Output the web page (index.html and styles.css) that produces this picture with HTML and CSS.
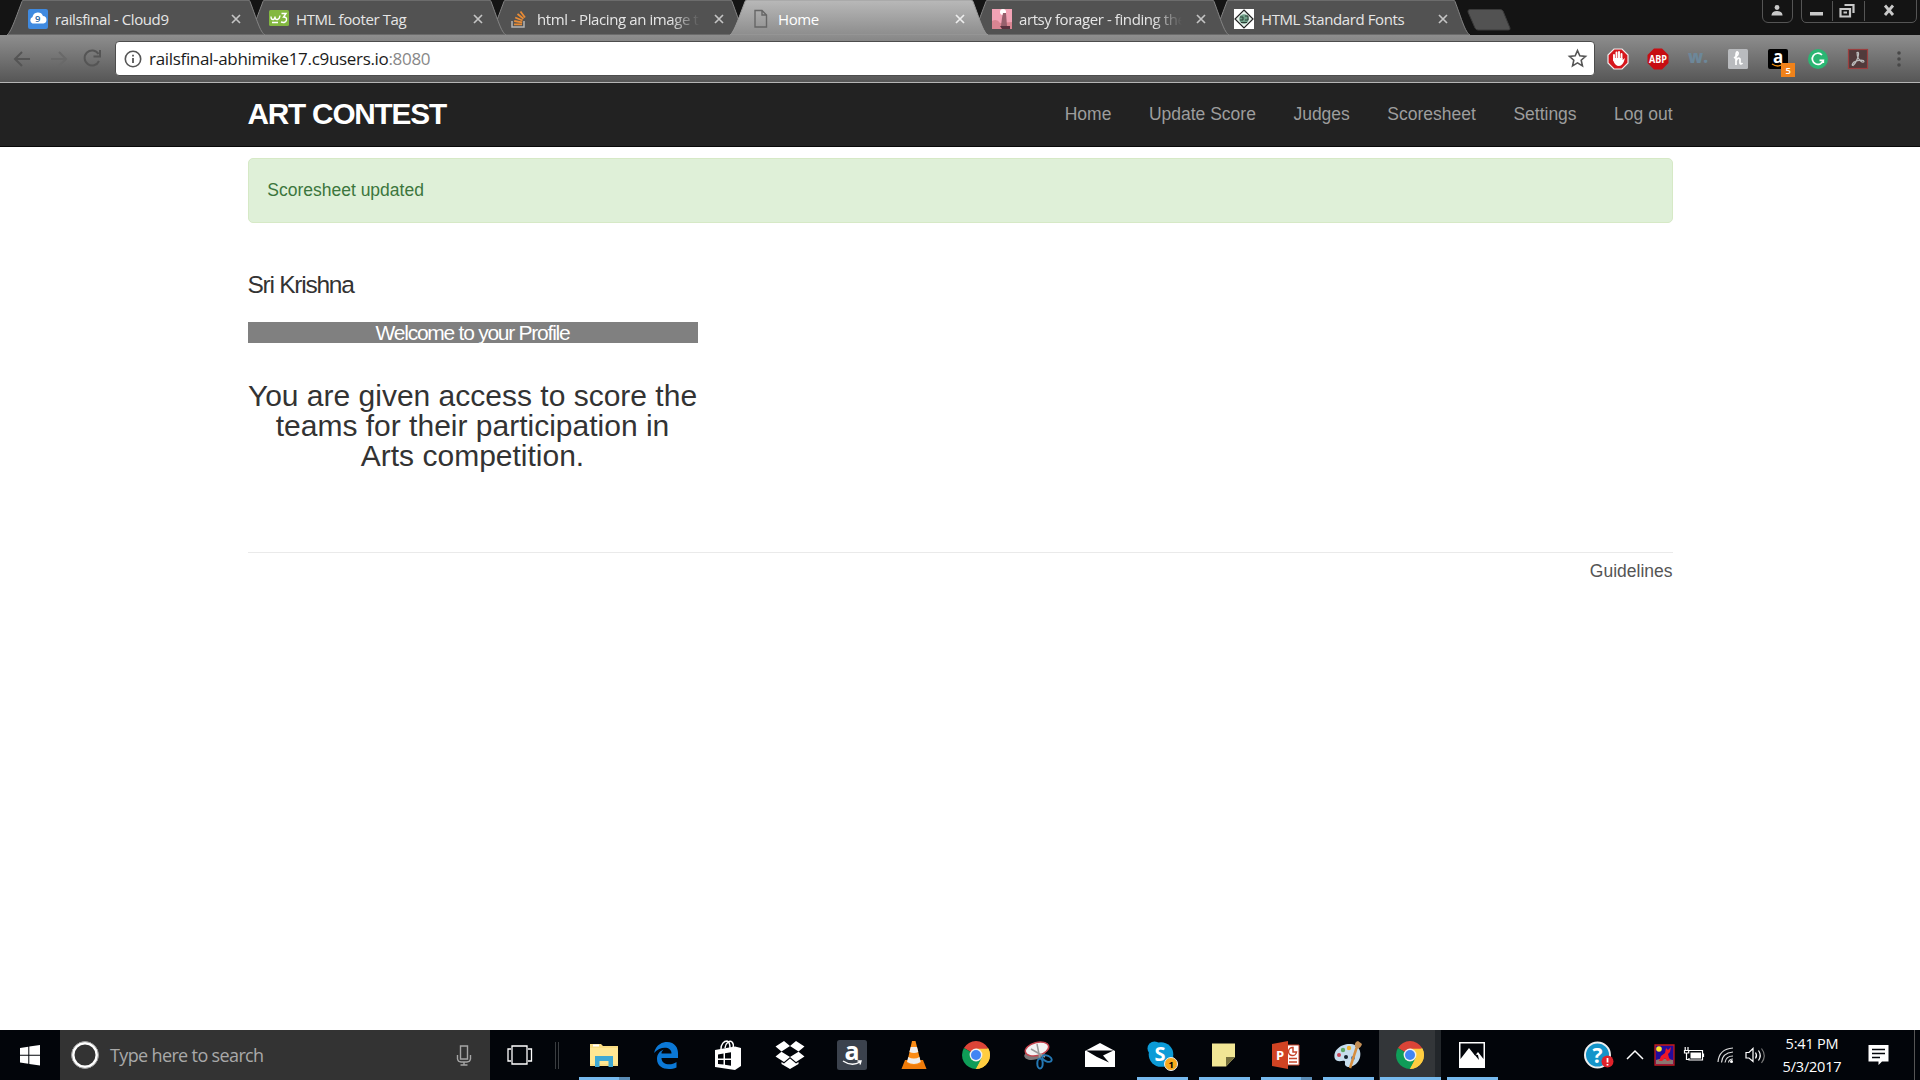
FILE: index.html
```html
<!DOCTYPE html>
<html lang="en">
<head>
<meta charset="utf-8">
<title>Home</title>
<link rel="stylesheet" href="styles.css">
</head>
<body>
<svg width="0" height="0" class="defs" aria-hidden="true">
  <defs>
    <linearGradient id="tab-active" x1="0" y1="0" x2="0" y2="1"><stop offset="0" stop-color="#b9b9b9"/><stop offset="1" stop-color="#8d8d8d"/></linearGradient>
    <symbol id="tab-shape" viewBox="0 0 258 35"><path d="M0 35C4 32 8 20 15 1.500Q15.500 0 17 0H241Q242.500 0 243 1.500C250 20 253 32 258 35Z"/></symbol>
    <symbol id="close" viewBox="0 0 10 10"><path d="M1 1L9 9M9 1L1 9" stroke="#c4c4c4" stroke-width="1.700"/></symbol>
    <symbol id="close-light" viewBox="0 0 10 10"><path d="M1 1L9 9M9 1L1 9" stroke="#eee" stroke-width="1.700"/></symbol>
    <symbol id="chrome" viewBox="0 0 28 28">
      <path d="M14 14L1.900 7A14 14 0 0 1 26.100 7Z" fill="#db4437"/>
      <path d="M14 14L26.100 7A14 14 0 0 1 14 28L13 27Z" fill="#ffcd40"/>
      <path d="M14 14L1.900 7A14 14 0 0 0 14 28L20 17.500Z" fill="#0f9d58"/>
      <path d="M14 7.700H26.500A14 14 0 0 1 14 28L19.500 17.200Z" fill="#ffcd40"/>
      <circle cx="14" cy="14" r="6.400" fill="#f1f1f1"/><circle cx="14" cy="14" r="5" fill="#4285f4"/>
    </symbol>
  </defs>
</svg>

<header class="browser">
  <div class="tab-row">
    <div class="tabs">
      <div class="tab">
        <svg class="shape" viewBox="0 0 258 35"><use href="#tab-shape"/></svg>
        <div class="tab-body">
          <svg class="favicon" viewBox="0 0 20 20"><rect width="20" height="20" rx="2" fill="#3f8ae0"/><path d="M4.500 14.500a3.500 3.500 0 0 1 0-6.500 5.500 5.500 0 0 1 10.500-1 3.800 3.800 0 0 1 .5 7.500Z" fill="#fff"/><text x="7" y="12.500" font-size="9.500" class="fav-text" fill="#28639f">9</text></svg>
          <span class="title">railsfinal - Cloud9</span>
          <svg class="close"><use href="#close"/></svg>
        </div>
      </div>
      <div class="tab">
        <svg class="shape" viewBox="0 0 258 35"><use href="#tab-shape"/></svg>
        <div class="tab-body">
          <svg class="favicon" viewBox="0 0 20 20"><rect y="1" width="20" height="16" rx="1.500" fill="#83b840"/><path d="M2 7.500Q2 11 4.500 10.500 6 10 6 7.500 6 11 8.500 10.500 10.500 10 11 6.500M12.500 4.500H17L14.500 8Q18 8 17.500 11 16.500 14.500 12 13M3 13.500H9" fill="none" stroke="#fff" stroke-width="1.400"/></svg>
          <span class="title">HTML footer Tag</span>
          <svg class="close"><use href="#close"/></svg>
        </div>
      </div>
      <div class="tab">
        <svg class="shape" viewBox="0 0 258 35"><use href="#tab-shape"/></svg>
        <div class="tab-body">
          <svg class="favicon" viewBox="0 0 20 20"><path d="M2 12V18H14V12" fill="none" stroke="#b5b5b5" stroke-width="1.500"/><path d="M4 15.300H12M4.200 12L12.200 13.300M5.200 8.500L12.500 11.500M7.500 5L13.500 9.800M10.500 2.500L15 8.500" stroke="#e88b35" stroke-width="1.800"/></svg>
          <span class="title fade">html - Placing an image t</span>
          <svg class="close"><use href="#close"/></svg>
        </div>
      </div>
      <div class="tab active">
        <svg class="shape" viewBox="0 0 258 35"><use href="#tab-shape"/></svg>
        <div class="tab-body">
          <svg class="favicon" viewBox="0 0 20 20"><path d="M1 1.500H8L12.500 6V18H1ZM8 1.500V6H12.500" fill="none" stroke="#666" stroke-width="1.400"/></svg>
          <span class="title">Home</span>
          <svg class="close"><use href="#close-light"/></svg>
        </div>
      </div>
      <div class="tab">
        <svg class="shape" viewBox="0 0 258 35"><use href="#tab-shape"/></svg>
        <div class="tab-body">
          <svg class="favicon" viewBox="0 0 20 20"><rect width="20" height="20" fill="#f2a3b6"/><path d="M0 12Q5 9 8 14L20 13V20H0Z" fill="#d98592"/><circle cx="11" cy="3" r="3" fill="#fff"/><path d="M11 4H14L15 17H9L10 9Z" fill="#96606d"/><path d="M8 17H18V20H10Z" fill="#5a3340"/></svg>
          <span class="title fade">artsy forager - finding the</span>
          <svg class="close"><use href="#close"/></svg>
        </div>
      </div>
      <div class="tab">
        <svg class="shape" viewBox="0 0 258 35"><use href="#tab-shape"/></svg>
        <div class="tab-body">
          <svg class="favicon" viewBox="0 0 20 20"><rect width="20" height="20" fill="#fff"/><path d="M10 1L19 10 10 19 1 10Z" fill="#e4efe9" stroke="#222" stroke-width="1.200"/><circle cx="10" cy="10" r="4.800" fill="#6fa088"/><path d="M6 8H9V11H6M11 7H14V11H11M7 13.500H13" fill="none" stroke="#2c3e36"/></svg>
          <span class="title">HTML Standard Fonts</span>
          <svg class="close"><use href="#close"/></svg>
        </div>
      </div>
    </div>
    <svg class="new-tab" viewBox="0 0 44 22"><path d="M3 .5H33Q35 .5 36 2L43 19Q43.500 21 41.500 21H11Q9 21 8 19L1 3Q.5 .5 3 .5Z" fill="#525252" stroke="#3a3a3a"/></svg>
    <svg class="window-controls" viewBox="0 0 156 24" fill="none" stroke="#555">
      <path d="M.5 0V17Q1 22 6 22.500H25Q30 22 30.500 17V0M39.500 0V17Q40 22.500 44 22.500H150Q154.500 22 154.500 17V0M70.500 1V21M102.500 1V21"/>
      <g fill="#c9c9c9" stroke="none"><circle cx="15" cy="7.500" r="2.400"/><path d="M9.500 15Q10 11 15 11T20.500 15V15.500H9.500ZM48 12H61V15.500H48Z"/></g>
      <path d="M78.500 9H88V16.500H78.500ZM82.500 5H91.500V13M81.500 12.500H85" stroke="#c9c9c9" stroke-width="2.200"/>
      <path d="M123 5.500L131 15M131 5.500L123 15" stroke="#c9c9c9" stroke-width="2.800"/>
    </svg>
  </div>
  <div class="toolbar">
    <svg class="nav-icons" viewBox="0 0 96 30" fill="none" stroke="#555" stroke-width="2">
      <path d="M23 15H8M15 8L8 15 15 22"/>
      <path d="M44 15H59M52 8L59 15 52 22" stroke="#696969"/>
      <path d="M91.500 10A7.500 7.500 0 1 0 92 17M93 6V12.500H86.500"/>
    </svg>
    <div class="address">
      <svg class="info" viewBox="0 0 18 18"><circle cx="9" cy="9" r="7.700" fill="none" stroke="#555" stroke-width="1.600"/><path d="M8.100 8H9.900V13H8.100ZM8.100 4.700H9.900V6.500H8.100Z" fill="#555"/></svg>
      <span class="url">railsfinal-abhimike17.c9users.io<i>:8080</i></span>
      <svg class="star" viewBox="0 0 18 18"><path d="M9 1.500L11.200 6.500 16.600 7 12.500 10.600 13.700 16 9 13.200 4.300 16 5.500 10.600 1.400 7 6.800 6.500Z" fill="none" stroke="#555" stroke-width="1.500"/></svg>
    </div>
    <div class="extensions">
      <svg viewBox="0 0 24 24"><path d="M8 2H16L22 8V16L16 22H8L2 16V8Z" fill="#d6161c" stroke="#eee" stroke-width="1.200"/><path d="M8 13V8M10.500 12V5.500M13 12V5M15.500 12V7" stroke="#fff" stroke-width="1.900" stroke-linecap="round"/><path d="M7 11H16.500V13L19 11Q17 19 13 19 9 19 7 13Z" fill="#fff"/></svg>
      <svg viewBox="0 0 24 24"><path d="M8 1.500H16L22.500 8V16L16 22.500H8L1.500 16V8Z" fill="#c70d12"/><text x="3" y="15.700" font-size="10" textLength="18" lengthAdjust="spacingAndGlyphs" class="ext-text" fill="#fff">ABP</text></svg>
      <svg viewBox="0 0 24 24"><text x="2" y="16" font-size="17" textLength="20" lengthAdjust="spacingAndGlyphs" class="ext-text heavy" fill="#6d8799">w.</text></svg>
      <svg viewBox="0 0 24 24"><rect x="2" y="2" width="20" height="20" rx="1.500" fill="#b9bbbe"/><path d="M8 11Q13 8 12 5.500 10 3.500 10 9V18M10 14Q12 9.500 14 12V16Q14.500 18 16.500 16" fill="none" stroke="#fff" stroke-width="1.700"/></svg>
      <svg class="wide" viewBox="0 0 30 30"><rect x="2" y="2" width="20" height="20" rx="2" fill="#000"/><text x="7" y="15.500" font-size="17" class="ext-text" fill="#fff">a</text><path d="M6 17Q12 21 17 17" fill="none" stroke="#f29111" stroke-width="1.300"/><rect x="15" y="16" width="14" height="14" fill="#f0821a"/><text x="19.500" y="26.500" font-size="9.500" class="badge-text" fill="#fff">5</text></svg>
      <svg viewBox="0 0 24 24"><circle cx="12" cy="12" r="10" fill="#2bb673"/><path d="M16 8A5.600 5.600 0 1 0 17.300 13.300H13.500M17.300 13V16" fill="none" stroke="#fff" stroke-width="1.700"/></svg>
      <svg viewBox="0 0 24 24"><rect x="2.500" y="2.500" width="19" height="19" fill="#513a3b" stroke="#9a3e3e" stroke-width="1.200"/><path d="M11 5.500Q13.500 4.500 12 10 10 16 7 18.500 5 18 8 15 13 12.500 17.500 13.500 19 15.500 16 15 11 12 11 5.500Z" fill="none" stroke="#bbb" stroke-width="1.200"/></svg>
      <svg viewBox="0 0 24 24" fill="#484848"><circle cx="13" cy="6" r="1.800"/><circle cx="13" cy="12" r="1.800"/><circle cx="13" cy="18" r="1.800"/></svg>
    </div>
  </div>
</header>

<main class="page">
  <nav class="navbar">
    <div class="container">
      <a class="brand">ART CONTEST</a>
      <ul class="links"><li>Home</li><li>Update Score</li><li>Judges</li><li>Scoresheet</li><li>Settings</li><li>Log out</li></ul>
    </div>
  </nav>
  <div class="content">
    <div class="alert">Scoresheet updated</div>
    <aside class="profile">
      <h1>Sri Krishna</h1>
      <h2>Welcome to your Profile</h2>
      <p>You are given access to score the<br>teams for their participation in<br>Arts competition.</p>
    </aside>
    <footer class="footer">Guidelines</footer>
  </div>
</main>

<div class="taskbar">
  <div class="start"><svg width="20" height="21" viewBox="0 0 20 21" fill="#fff"><path d="M0 3L8.300 1.800V9.700H0ZM9.300 1.600L20 0V9.700H9.300ZM0 10.700H8.300V18.700L0 17.500ZM9.300 10.700H20V20.500L9.300 18.900Z"/></svg></div>
  <div class="search">
    <svg width="28" height="28" viewBox="0 0 28 28"><circle cx="14" cy="14" r="12" fill="none" stroke="#fff" stroke-width="3"/><circle cx="14" cy="14" r="13.400" fill="none" stroke="#999"/></svg>
    <span class="search-label">Type here to search</span>
    <svg class="mic" width="16" height="21" viewBox="0 0 16 21" fill="none" stroke="#a5a5a5" stroke-width="1.400"><path d="M4.500 1H11.500V14H4.500ZM1.500 10V14Q2 17 5 17H11Q14 17 14.500 14V10M8 17V20M4.500 20H11.500"/></svg>
  </div>
  <svg class="task-view" width="26" height="20" viewBox="0 0 26 20" fill="none" stroke="#fff" stroke-width="1.300"><path d="M5 1H20V19H5ZM4 4H1V16H4M21 4H24.500V16H21"/></svg>
  <div class="divider"></div>
  <div class="apps">
    <div class="app open split"><svg viewBox="0 0 30 30"><path d="M1 4H12L14 6H29V26H1Z" fill="#f9dc82"/><path d="M1 8H29V24H1Z" fill="#ffe793"/><path d="M4 4.500H10V6.500H4Z" fill="#fff"/><path d="M6 27V16H24V27H19.500V21H10.500V27Z" fill="#3fa9d4"/></svg></div>
    <div class="app"><svg viewBox="0 0 30 30"><path d="M3 13C5 4 12 2 16 2 24 2 27 8 27 13V18H10.500C10.500 25 20 26 25.500 22V27.500C17 31 6 28.500 6 19 6 14 9 11 12.500 9.500Q10.500 11.500 10.500 13.500H20.500C20.500 6 9 6 3 13Z" fill="#0b78d6"/></svg></div>
    <div class="app"><svg viewBox="0 0 30 30"><path d="M8 9C8 4 11 1 14 1Q17 2 17 8M12 8C13 2 17 0 19 2Q21 4 20 8" fill="none" stroke="#fff" stroke-width="1.500"/><path d="M2 10L22 6.500 28 8V26L22 30 2 27Z" fill="#fff"/><path d="M5 14.500L10.500 13.500V18.500H5ZM12 13.300L18 12.300V18.500H12ZM5 20H10.500V24.500L5 24ZM12 20H18V25.700L12 24.800Z" fill="#02050a"/></svg></div>
    <div class="app"><svg viewBox="0 0 30 30" fill="#fff"><path d="M9 1L15 6 6.500 11.500.500 6.500ZM21 1L29.500 6.500 23.500 11.500 15 6ZM.5 16.500L6.500 11.800 15 17 9 22ZM23.500 11.800L29.500 16.500 21 22 15 17ZM15 18.500L21 23.500 23.500 22V24L15 29 6.500 24V22L9 23.500Z"/></svg></div>
    <div class="app"><svg viewBox="0 0 30 30"><rect width="30" height="30" rx="2.500" fill="#3b424d"/><text x="7.500" y="20" font-size="25" class="ext-text" fill="#fff">a</text><path d="M6 21Q15 27 23 22M20.500 21L24 21 23 24.500" fill="none" stroke="#fff" stroke-width="1.400"/></svg></div>
    <div class="app"><svg viewBox="0 0 30 30"><path d="M6 20H24L27.500 29H2.500Z" fill="#f07c0a"/><path d="M13 1H16.500L22 23Q15 27 8 23Z" fill="#fa8c16"/><path d="M11.700 7H18L19.300 12Q15 14 10.400 12ZM9.200 17Q15 20 20.500 17L21.700 22Q15 26 8 22Z" fill="#eee"/></svg></div>
    <div class="app"><svg viewBox="-1 -1 30 30"><use href="#chrome" width="28" height="28"/></svg></div>
    <div class="app"><svg viewBox="0 0 30 30"><ellipse cx="12" cy="14" rx="11" ry="5.500" fill="#7b7778" transform="rotate(-15 12 14)"/><ellipse cx="14" cy="9" rx="12" ry="6.500" fill="#f2f2f2" stroke="#c5434d" stroke-width="1.500" transform="rotate(-15 14 9)"/><path d="M14 4L17 19M8 9L22 17" stroke="#999" stroke-width="1.500"/><g fill="none" stroke="#2478b4" stroke-width="2"><ellipse cx="17" cy="23.500" rx="2.700" ry="5"/><ellipse cx="24" cy="18.500" rx="5" ry="2.800" transform="rotate(25 24 18.500)"/></g></svg></div>
    <div class="app"><svg viewBox="0 0 30 30"><path d="M0 11L15 3 30 11V27H0Z" fill="#fff"/><path d="M1 10.500H28.500L18 15.500 24 22.500 12 17Z" fill="#02050a"/></svg></div>
    <div class="app open"><svg viewBox="0 0 30 30"><circle cx="7.500" cy="8.500" r="7" fill="#0c9bd7"/><circle cx="20" cy="20" r="7" fill="#0c9bd7"/><circle cx="14" cy="14.500" r="12.300" fill="#0c9bd7"/><text x="7.500" y="21" font-size="20" class="ext-text" fill="#fff">S</text><circle cx="24" cy="24" r="6.500" fill="#f7a91c" stroke="#eee"/><text x="21.500" y="27.500" font-size="9.500" class="ext-text" fill="#000">1</text></svg></div>
    <div class="app open"><svg viewBox="0 0 30 30"><path d="M3 3.500H26V17L17 26.500H3Z" fill="#f1e695"/><path d="M17 26.500V17H26Z" fill="#756f3d"/></svg></div>
    <div class="app open split"><svg viewBox="0 0 30 30"><path d="M13 5H28V25H13Z" fill="#fff" stroke="#c8452b"/><path d="M1 4L17 1V29L1 26Z" fill="#d04323"/><path d="M22 7.500A4 4 0 1 0 25.500 12H22ZM18 18.500H26M18 22H26" fill="none" stroke="#c8452b" stroke-width="1.500"/><text x="5" y="19.500" font-size="13" class="ext-text" fill="#fff">P</text></svg></div>
    <div class="app open"><svg viewBox="0 0 30 30"><path d="M2 19C-1 10 9 3 18 4 29 5 30 18 23 24 17 29 11 27 12 23 13 18 5 24 2 19Z" fill="#c6dded"/><circle cx="6" cy="15" r="2" fill="#ca4455"/><circle cx="10" cy="10" r="2.200" fill="#60a864"/><circle cx="16" cy="8" r="2.200" fill="#efb12f"/><circle cx="13" cy="17" r="2" fill="#15232f"/><circle cx="20" cy="18" r="2" fill="#4477b4"/><path d="M17 28L23.500 8" stroke="#d78e3e" stroke-width="2.500"/><path d="M22 7Q21 2 25 1L29 4Q28 8 24 9Z" fill="#c49057"/></svg></div>
    <div class="app open current"><svg viewBox="-1 -1 30 30"><use href="#chrome" width="28" height="28"/></svg></div>
    <div class="app open"><svg viewBox="0 0 30 30"><path d="M2 2H28V28H2Z" fill="#fff"/><path d="M3.500 3.500H26.500V19L21 12 18 15.500 12 8 3.500 19Z" fill="#02050a"/><path d="M17 14L22 20 21 15Z" fill="#02050a"/></svg></div>
  </div>
  <div class="tray">
    <svg class="help" width="30" height="28" viewBox="0 0 30 28"><circle cx="13.500" cy="14" r="12.500" fill="#1494c9" stroke="#eee" stroke-width="2"/><text x="8.500" y="21.500" font-size="21" class="ext-text" fill="#fff">?</text><circle cx="23.500" cy="20.500" r="6" fill="#e0222a"/><path d="M23.500 17V21.500M23.500 23V24.500" stroke="#fff" stroke-width="1.800"/></svg>
    <svg class="chevron" width="18" height="12" viewBox="0 0 18 12" fill="none" stroke="#fff" stroke-width="1.500"><path d="M1 10L9 2 17 10"/></svg>
    <svg class="game" width="21" height="22" viewBox="0 0 21 22"><path d="M1 1H20V21H1Z" fill="#220c9c" stroke="#c51b1b" stroke-width="1.300"/><circle cx="5" cy="5" r="2.800" fill="#ffe52b"/><path d="M2 16Q8 13 19 16V20H2Z" fill="#8c7770"/><path d="M5 17L7 12 11 9 12 4 14 6 17 3 16 8 14 10 15 14 17 16 13 17 11 14 8 17Z" fill="#ee1826"/></svg>
    <svg class="battery" width="21" height="16" viewBox="0 0 21 16" fill="none" stroke="#fff" stroke-width="1.200"><path d="M5 3.500H18.500V13H5V11M19.500 6.500V10"/><path d="M6.500 5.500H17V11.500H6.500Z" fill="#fff" stroke="none"/><path d="M1.200 0V3M4 0V3M.5 3.500H4.700V6H.5ZM2.500 6V12.500H5"/></svg>
    <svg class="wifi" width="18" height="17" viewBox="0 0 18 17" fill="none" stroke="#ddd" stroke-width="1.200"><path d="M1 15Q2 2 16 1M4.500 15.500Q5 6 16 5M8 15.500Q9 9 16 9"/><path d="M11.500 15.500Q12 12 16 12" /><circle cx="14.500" cy="14.500" r="1.500" fill="#fff" stroke="none"/></svg>
    <svg class="speaker" width="21" height="19" viewBox="0 0 21 19" fill="none" stroke="#fff" stroke-width="1.200"><path d="M1 6.500H4L8 2.500V15.500L4 12H1ZM10.500 6.500Q12.500 9.500 10.500 12.500M13.500 4.500Q17 9.500 13.500 14.500"/><path d="M16.500 2.500Q22 9.500 16.500 17" stroke="#777"/></svg>
    <div class="clock"><span>5:41 PM</span><span>5/3/2017</span></div>
    <svg class="notice" width="21" height="20" viewBox="0 0 21 20"><path d="M.5 0H20.500V16.500H14L10.500 20V16.500H.5Z" fill="#fff"/><path d="M4 4.500H17M4 8.500H17M4 12.500H12" stroke="#02050a" stroke-width="1.300"/></svg>
    <div class="peek"></div>
  </div>
</div>
</body>
</html>
```
FILE: styles.css
```css
* { box-sizing: border-box; }
body { margin: 0; width: 1920px; height: 1080px; overflow: hidden; display: flex; flex-direction: column; background: #fff; font-family: "Liberation Sans", Arial, sans-serif; }
svg { display: block; flex: none; overflow: visible; }
.defs { position: absolute; }
.browser { height: 83px; flex: none; font-family: "Open Sans", "Noto Sans", sans-serif; }
.ext-text { font-family: "Open Sans", sans-serif; font-weight: 700; }
.heavy { font-weight: 800; }
.fav-text, .badge-text { font-family: "Open Sans", sans-serif; font-weight: 600; }

.tab-row { height: 35px; background: #141414; display: flex; padding-left: 7px; }
.tabs { display: flex; }
.tab { width: 258px; height: 35px; margin-right: -17px; display: grid; position: relative; }
.tab:nth-child(1) { z-index: 6; }
.tab:nth-child(2) { z-index: 5; }
.tab:nth-child(3) { z-index: 4; }
.tab:nth-child(5) { z-index: 3; }
.tab:nth-child(6) { z-index: 2; }
.tab.active { z-index: 10; }
.shape { grid-area: 1 / 1; width: 258px; height: 35px; fill: #525252; stroke: #858585; stroke-width: 1; }
.active .shape { fill: url(#tab-active); stroke: #9c9c9c; }
.tab-body { grid-area: 1 / 1; min-width: 0; display: flex; align-items: center; padding: 3px 23px 0 21px; color: #e6e6e6; }
.tab:first-child .tab-body { padding-right: 24px; }
.tab:last-child .tab-body { padding: 3px 22px 0 22px; }
.active .tab-body { padding-left: 24px; color: #fff; }
.favicon { width: 20px; height: 20px; margin-right: 7px; }
.active .favicon { margin-right: 4px; }
.title { flex: 1; min-width: 0; margin-right: 10px; font-size: 15px; line-height: 20px; white-space: nowrap; overflow: hidden; letter-spacing: -0.4px; }
.fade { margin-right: 14px; -webkit-mask-image: linear-gradient(90deg, #000 82%, transparent 100%); mask-image: linear-gradient(90deg, #000 82%, transparent 100%); }
.close { width: 10px; height: 10px; }
.new-tab { width: 44px; height: 22px; margin: 9px 0 0 14px; }
.window-controls { width: 156px; height: 24px; margin-left: auto; margin-right: 2px; }

.toolbar { height: 48px; border-bottom: 1px solid #b5b5b5; background: linear-gradient(#8e8e8e, #565656); display: flex; align-items: center; padding-left: 7px; }
.nav-icons { width: 96px; height: 30px; }
.address { width: 1480px; height: 35px; margin-left: 12px; padding: 0 9px 0 8px; border: 1px solid #4d4d4d; border-radius: 4px; background: #fff; display: flex; align-items: center; }
.info { width: 18px; height: 18px; }
.url { flex: 1; margin-left: 7px; font-size: 17px; letter-spacing: -0.32px; line-height: 24px; color: #1b1b1b; }
.url i { font-style: normal; color: #888; }
.star { width: 19px; height: 19px; margin-right: -2px; }
.extensions { height: 24px; display: flex; gap: 16px; margin-left: 11px; }
.extensions svg { width: 24px; height: 24px; }
.extensions .wide { width: 30px; height: 30px; margin-right: -6px; }

.page { flex: 1; min-height: 0; color: #333; font-size: 17.5px; }
.navbar { height: 64px; background: #222; border-bottom: 1px solid #080808; }
.container, .content { width: 1425px; margin-left: 247.5px; }
.container { display: flex; justify-content: space-between; align-items: center; height: 62px; }
.brand { font-size: 29.75px; font-weight: 700; letter-spacing: -1.2px; color: #fff; line-height: 62px; }
.links { display: flex; gap: 37.5px; list-style: none; margin: 0; padding: 0; color: #9d9d9d; }
.alert { height: 65px; margin-top: 11px; padding: 18.75px; border: 1px solid #d6e9c6; border-radius: 5px; background: #dff0d8; color: #3c763d; line-height: 25px; }
.profile { width: 450px; margin-top: 50px; text-align: center; }
.profile h1 { margin: 0; font-size: 24.5px; font-weight: 400; line-height: 24px; letter-spacing: -1.25px; text-align: left; }
.profile h2 { margin: 25px 0 0; font-size: 21px; font-weight: 400; line-height: 21px; letter-spacing: -1.25px; color: #fff; background: #808080; }
.profile p { margin: 38px 0 0; font-size: 30px; line-height: 30px; white-space: nowrap; }
.footer { margin-top: 81px; padding-top: 6px; border-top: 1px solid #eaeaea; text-align: right; line-height: 25px; color: #555; }

.taskbar { height: 50px; flex: none; display: flex; align-items: center; background: #02050a; font-family: "Open Sans", "Noto Sans", sans-serif; color: #fff; }
.start { width: 60px; display: flex; justify-content: center; }
.search { width: 430px; height: 50px; background: #333; display: flex; align-items: center; padding: 0 18px 0 11px; }
.search-label { flex: 1; margin-left: 11px; font-size: 18px; color: #a9a9a9; letter-spacing: -0.64px; }
.task-view { margin-left: 17px; }
.divider { width: 4px; height: 27px; margin: 0 14px 0 22px; border: solid #3a3d40; border-width: 0 1px; }
.apps { display: flex; height: 50px; }
.app { width: 62px; height: 50px; padding-top: 10px; display: flex; flex-direction: column; align-items: center; justify-content: space-between; }
.app svg { width: 30px; height: 30px; }
.app.open::after { content: ""; width: 51px; height: 3px; background: #76b9ed; }
.app.split::after { background: linear-gradient(90deg, #76b9ed 40px, #5a8cb5 40px); }
.current { background: linear-gradient(90deg, #333639 56px, #22262a 56px); }
.app.current::after { width: 61px; }
.tray { flex: 1; height: 50px; display: flex; align-items: center; }
.help { margin-left: 81px; }
.chevron { margin-left: 12px; }
.game { margin-left: 10px; }
.battery { margin-left: 9px; }
.wifi { margin-left: 12px; }
.speaker { margin-left: 10px; }
.clock { width: 66px; margin-left: 13px; display: flex; flex-direction: column; align-items: center; font-size: 14.5px; line-height: 23px; letter-spacing: -0.2px; }
.notice { margin-left: 23px; }
.peek { width: 1px; height: 50px; margin-left: auto; margin-right: 5px; background: #555; }
```
